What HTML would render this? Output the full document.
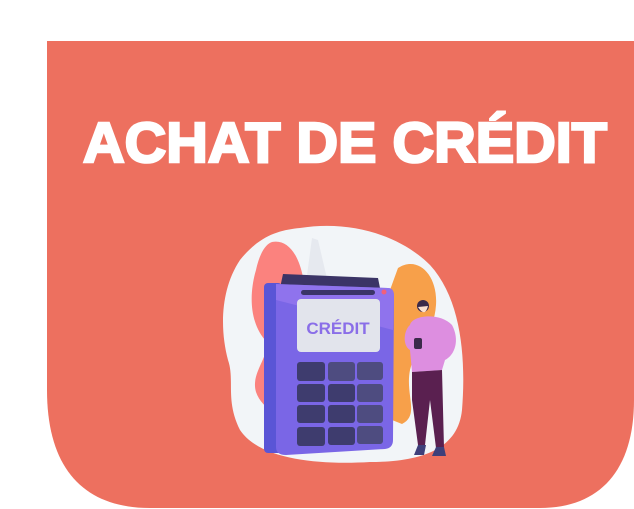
<!DOCTYPE html>
<html><head><meta charset="utf-8"><style>
html,body{margin:0;padding:0;background:#fff;width:634px;height:509px;overflow:hidden}
</style></head><body>
<svg width="634" height="509" viewBox="0 0 634 509" xmlns="http://www.w3.org/2000/svg">
<path d="M47 41 H634 V400 C634 470 600 508 540 508 H150 C85 508 47 470 47 390 Z" fill="#ed705f"/>
<text x="83" y="162" font-family="Liberation Sans, sans-serif" font-weight="900" font-size="57" fill="#fff" textLength="524" lengthAdjust="spacingAndGlyphs" stroke="#fff" stroke-width="2.5">ACHAT DE CRÉDIT</text>
<path d="M300 228 C350 220 400 235 430 265 C462 300 466 360 462 410 C458 450 420 462 370 462 C320 465 260 460 240 430 C225 400 235 380 228 360 C220 330 220 290 240 260 C260 235 280 230 300 228 Z" fill="#f2f5f8"/>
<path d="M312 238 L318 240 L325 270 L330 290 L305 290 Z" fill="#e6e9ef"/>
<path d="M272 242 C292 238 305 265 305 300 L300 420 C285 420 262 410 256 392 C250 372 272 355 265 340 C248 320 250 290 256 270 C260 252 266 244 272 242 Z" fill="#fb827e"/>
<path d="M398 268 C418 255 438 275 436 305 C434 335 416 345 410 370 C405 395 420 415 402 424 L392 420 L390 290 Z" fill="#f7a04a"/>
<path d="M283 274 L378 278 L380 288 L280 288 Z" fill="#3b3466"/>
<rect x="264" y="283" width="18" height="170" rx="4" fill="#5a55d6"/>
<path d="M276 284 L388 288 Q394 288 394 296 L393 440 Q393 448 385 449 L286 455 Q276 455 276 447 Z" fill="#7a66e6"/>
<path d="M276 284 L388 288 Q394 288 394 296 L393 330 L276 300 Z" fill="#9d7cf2" opacity="0.6"/>
<rect x="301" y="290" width="74" height="5" rx="2.5" fill="#3a3468"/>
<circle cx="384" cy="292" r="2.5" fill="#f2607a"/>
<rect x="297" y="299" width="83" height="53" rx="4" fill="#e2e4ec"/>
<text x="338" y="334" text-anchor="middle" font-family="Liberation Sans, sans-serif" font-weight="bold" font-size="17" fill="#8a6ee8">CRÉDIT</text>
<g fill="#3e3c6e">
<rect x="297" y="362" width="28" height="19" rx="3"/><rect x="328" y="362" width="27" height="19" rx="3" fill="#4e4c80"/><rect x="357" y="362" width="26" height="18" rx="3" fill="#4e4c80"/>
<rect x="297" y="384" width="28" height="18" rx="3"/><rect x="328" y="384" width="27" height="18" rx="3"/><rect x="357" y="384" width="26" height="18" rx="3" fill="#4e4c80"/>
<rect x="297" y="405" width="28" height="18" rx="3"/><rect x="328" y="405" width="27" height="18" rx="3"/><rect x="357" y="405" width="26" height="18" rx="3" fill="#4e4c80"/>
<rect x="297" y="427" width="28" height="19" rx="3"/><rect x="328" y="427" width="27" height="18" rx="3"/><rect x="357" y="426" width="26" height="18" rx="3" fill="#4e4c80"/>
</g>
<circle cx="423" cy="306" r="6" fill="#3b2a4a"/>
<path d="M418 307 Q425 318 428 306 Z" fill="#fbe0d0"/>
<path d="M410 325 C412 315 440 312 452 325 C460 340 455 355 445 360 L442 370 L412 372 L410 350 C402 345 404 330 410 325 Z" fill="#dd8ee0"/>
<rect x="414" y="338" width="8" height="11" rx="2" fill="#3b2a4a"/>
<path d="M412 372 L442 370 L444 448 L436 448 L430 400 L425 445 L418 445 L412 400 Z" fill="#5a2050"/>
<path d="M418 445 L426 445 L424 455 L414 455 Z" fill="#3e3f7a"/>
<path d="M436 447 L444 447 L446 456 L432 456 Z" fill="#3e3f7a"/>
</svg>
</body></html>
